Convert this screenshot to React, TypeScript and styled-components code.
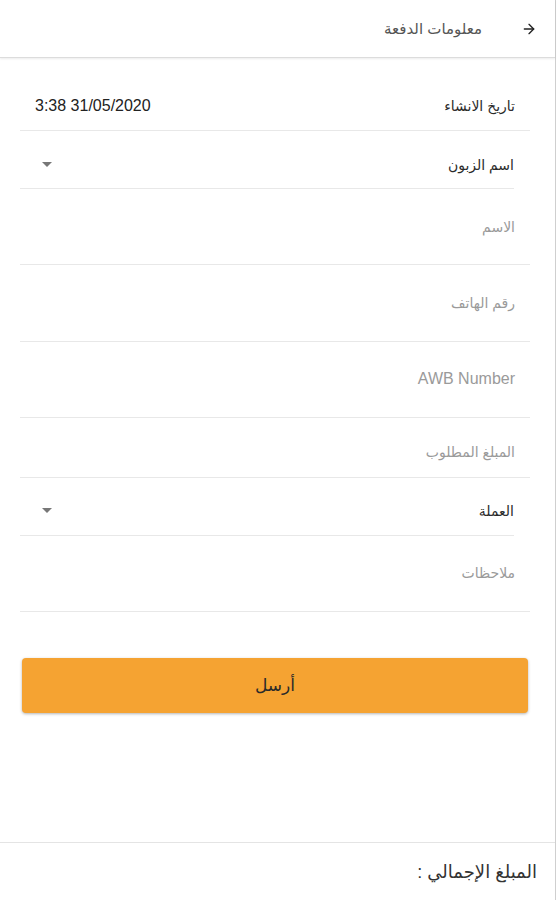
import React from 'react';
import styled, { createGlobalStyle } from 'styled-components';
import { ArrowRight } from 'lucide-react';

const GlobalStyle = createGlobalStyle`
  html, body {
    margin: 0;
    padding: 0;
    background: #ffffff;
  }
  * {
    box-sizing: border-box;
  }
`;

type FieldDef = {
  label: string;
  kind: 'static' | 'select' | 'input';
  value?: string;
  height: number;
  bottom: number;
};

// rows of the payment form, top to bottom
const fields: FieldDef[] = [
  { label: 'تاريخ الانشاء', kind: 'static', value: '3:38 31/05/2020', height: 73, bottom: 14 },
  { label: 'اسم الزبون', kind: 'select', height: 58, bottom: 13 },
  { label: 'الاسم', kind: 'input', height: 76, bottom: 27 },
  { label: 'رقم الهاتف', kind: 'input', height: 77, bottom: 28 },
  { label: 'AWB Number', kind: 'input', height: 76, bottom: 28 },
  { label: 'المبلغ المطلوب', kind: 'input', height: 60, bottom: 15 },
  { label: 'العملة', kind: 'select', height: 58, bottom: 14 },
  { label: 'ملاحظات', kind: 'input', height: 76, bottom: 28 },
];

const isLatin = (s: string) => /^[A-Za-z0-9 ]+$/.test(s);

const App = () => {
  return (
    <>
      <GlobalStyle />
      <StPage dir="rtl">
        <StHeader>
          <StBackButton>
            <ArrowRight size={18} strokeWidth={2} />
          </StBackButton>
          <StHeaderTitle>معلومات الدفعة</StHeaderTitle>
        </StHeader>

        <StForm>
          {fields.map((f) => (
            <StRow key={f.label} $kind={f.kind} $height={f.height} $bottom={f.bottom}>
              <StLabel $muted={f.kind === 'input'} $latin={isLatin(f.label)}>
                {f.label}
              </StLabel>
              {f.kind === 'static' && <StValue dir="ltr">{f.value}</StValue>}
              {f.kind === 'select' && <StCaret />}
            </StRow>
          ))}
          <StSubmit>أرسل</StSubmit>
        </StForm>

        <StFooter>
          <StTotal>المبلغ الإجمالي :</StTotal>
        </StFooter>
      </StPage>
    </>
  );
};

const StPage = styled.div`
  width: 556px;
  min-height: 900px;
  display: flex;
  flex-direction: column;
  border-right: 1px solid #cfcfcf;
  font-family: 'Liberation Sans', 'DejaVu Sans', Arial, sans-serif;
  color: #333333;
  background: #ffffff;
`;

const StHeader = styled.header`
  height: 58px;
  display: flex;
  align-items: center;
  gap: 39px;
  padding: 0 18px 0 0;
  border-bottom: 1px solid #dcdcdc;
  box-shadow: 0 1px 2px rgba(0, 0, 0, 0.08);
`;

const StBackButton = styled.div`
  width: 16px;
  height: 18px;
  display: flex;
  align-items: center;
  justify-content: center;
  color: #222222;
`;

const StHeaderTitle = styled.h1`
  margin: 0;
  font-size: 15px;
  font-weight: 400;
  color: #555555;
`;

const StForm = styled.main`
  display: flex;
  flex-direction: column;
  padding: 0 25px 0 20px;
`;

const StRow = styled.div<{ $kind: string; $height: number; $bottom: number }>`
  height: ${(p) => p.$height}px;
  display: flex;
  align-items: flex-end;
  justify-content: space-between;
  padding-bottom: ${(p) => p.$bottom}px;
  padding-right: ${(p) => (p.$kind === 'select' ? 0 : 15)}px;
  padding-left: ${(p) => (p.$kind === 'select' ? 22 : 15)}px;
  margin-right: ${(p) => (p.$kind === 'select' ? 16 : 0)}px;
  border-bottom: 1px solid #e8e8e8;
`;

const StLabel = styled.span<{ $muted: boolean; $latin: boolean }>`
  font-size: ${(p) => (p.$latin ? 16 : 14)}px;
  line-height: 20px;
  color: ${(p) => (p.$muted ? '#9a9a9a' : '#2b2b2b')};
`;

const StValue = styled.span`
  font-size: 16px;
  line-height: 20px;
  color: #222222;
`;

const StCaret = styled.span`
  width: 0;
  height: 0;
  margin-bottom: 8px;
  border-left: 5px solid transparent;
  border-right: 5px solid transparent;
  border-top: 5px solid #777777;
`;

const StSubmit = styled.button`
  margin: 46px 2px 0;
  height: 55px;
  border: none;
  border-radius: 4px;
  background: #f5a332;
  box-shadow: 0 1px 3px rgba(0, 0, 0, 0.3);
  font-family: 'Liberation Sans', 'DejaVu Sans', Arial, sans-serif;
  font-size: 17px;
  color: #2a2a2a;
  cursor: pointer;
`;

const StFooter = styled.footer`
  margin-top: auto;
  height: 58px;
  display: flex;
  align-items: center;
  padding: 0 18px 0 0;
  border-top: 1px solid #e4e4e4;
`;

const StTotal = styled.span`
  font-size: 18px;
  color: #333333;
`;

export default App;
